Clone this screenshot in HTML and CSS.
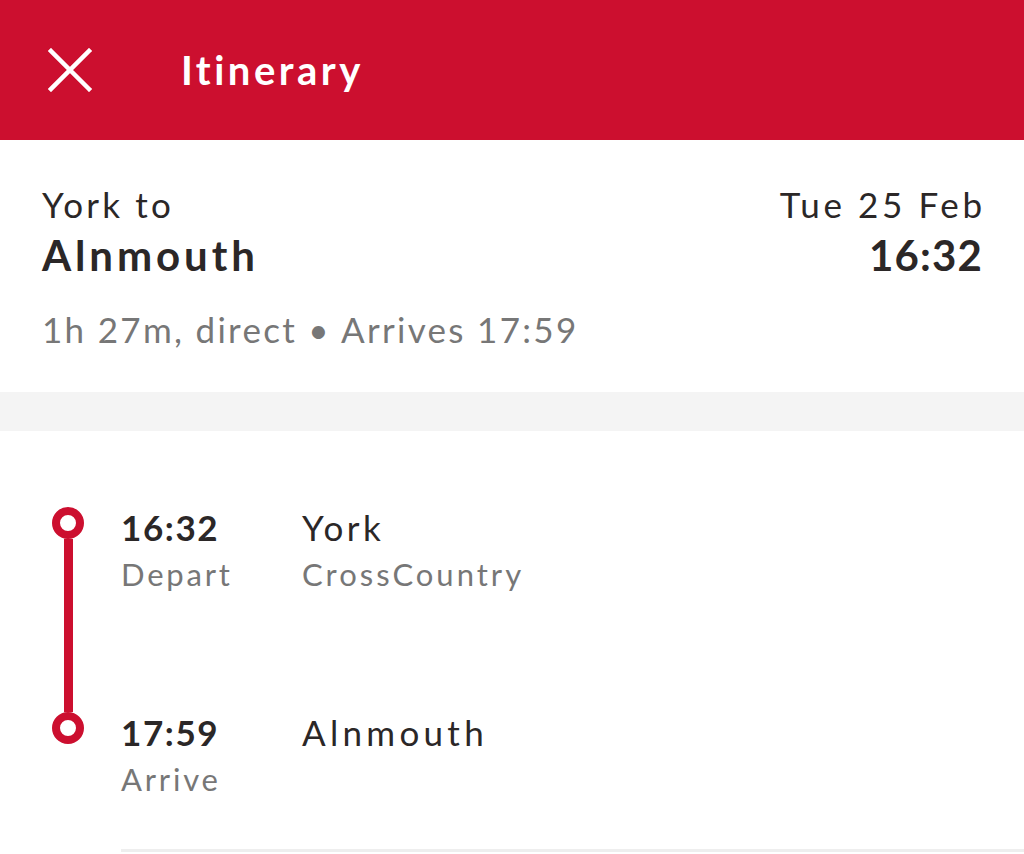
FILE: index.html
```html
<!DOCTYPE html>
<html lang="en">
<head>
<meta charset="utf-8">
<title>Itinerary</title>
<link rel="stylesheet" href="styles.css">
</head>
<body>
<header class="topbar">
  <svg class="close" viewBox="0 0 44 44" width="44" height="44" aria-label="Close">
    <path d="M3 3 L41 41 M41 3 L3 41" stroke="#fff" stroke-width="4.5" stroke-linecap="square" fill="none"/>
  </svg>
  <h1 class="title">Itinerary</h1>
</header>

<section class="summary">
  <div class="route-row">
    <div class="route">
      <div class="line-regular">York to</div>
      <div class="line-bold">Alnmouth</div>
    </div>
    <div class="when">
      <div class="line-regular date">Tue 25 Feb</div>
      <div class="line-bold clock">16:32</div>
    </div>
  </div>
  <div class="meta">1h 27m, direct • Arrives 17:59</div>
</section>

<div class="band"></div>

<section class="journey">
  <div class="rail">
    <span class="stop-dot"></span>
    <span class="rail-line"></span>
    <span class="stop-dot"></span>
  </div>
  <div class="stops">
    <div class="stop stop-first">
      <div class="stop-time">
        <div class="time">16:32</div>
        <div class="sub">Depart</div>
      </div>
      <div class="stop-place">
        <div class="station station-short">York</div>
        <div class="sub operator">CrossCountry</div>
      </div>
    </div>
    <div class="stop">
      <div class="stop-time">
        <div class="time">17:59</div>
        <div class="sub">Arrive</div>
      </div>
      <div class="stop-place">
        <div class="station">Alnmouth</div>
      </div>
    </div>
    <div class="divider"></div>
  </div>
</section>
</body>
</html>
```

FILE: styles.css
```css
html, body {
  margin: 0;
  padding: 0;
  background: #ffffff;
}

body {
  font-family: Lato, "Open Sans", sans-serif;
  color: #2b2727;
  width: 1024px;
  height: 854px;
  overflow: hidden;
}

.topbar {
  height: 140px;
  background: #cc0f2f;
  display: flex;
  align-items: center;
  padding-left: 48px;
  box-sizing: border-box;
}

.close {
  display: block;
  flex: none;
}

.title {
  margin: 0 0 0 89px;
  font-size: 40px;
  line-height: 48px;
  font-weight: 700;
  color: #ffffff;
  letter-spacing: 3.5px;
}

.summary {
  padding: 43px 42px 42px 42px;
}

.route-row {
  display: flex;
  justify-content: space-between;
}

.when {
  text-align: right;
}

.line-regular {
  font-size: 35px;
  line-height: 42px;
  font-weight: 400;
  letter-spacing: 3.2px;
}

.line-bold {
  margin-top: 5px;
  font-size: 42px;
  line-height: 50px;
  font-weight: 700;
  letter-spacing: 3.9px;
}

.date {
  letter-spacing: 3.6px;
  margin-right: -3.6px;
}

.clock {
  letter-spacing: 1.2px;
  margin-right: -1.2px;
}

.meta {
  margin-top: 28px;
  font-size: 35px;
  line-height: 42px;
  color: #777777;
  letter-spacing: 2.3px;
}

.band {
  height: 39px;
  background: #f4f4f4;
}

.journey {
  display: flex;
  padding: 74px 0 0 52px;
}

.rail {
  display: flex;
  flex-direction: column;
  align-items: center;
  width: 32px;
  padding-top: 2px;
  flex: none;
}

.stop-dot {
  display: block;
  width: 32px;
  height: 32px;
  box-sizing: border-box;
  border: 8px solid #cc0f2f;
  border-radius: 50%;
  background: #fff;
}

.rail-line {
  display: block;
  width: 9px;
  height: 173px;
  background: #cc0f2f;
}

.stops {
  flex: 1;
  margin-left: 37px;
}

.stop {
  display: flex;
}

.stop-first {
  height: 205px;
}

.stop-time {
  width: 181px;
  flex: none;
}

.time {
  font-size: 35px;
  line-height: 44px;
  font-weight: 700;
  letter-spacing: 1.6px;
}

.station {
  font-size: 35px;
  line-height: 44px;
  font-weight: 400;
  letter-spacing: 4.3px;
}

.station-short {
  letter-spacing: 3.5px;
}

.sub {
  margin-top: 3px;
  font-size: 31px;
  line-height: 44px;
  color: #777777;
  letter-spacing: 2.8px;
}

.operator {
  letter-spacing: 3px;
}

.divider {
  margin-top: 48px;
  height: 3px;
  background: #eeeeee;
}
```
